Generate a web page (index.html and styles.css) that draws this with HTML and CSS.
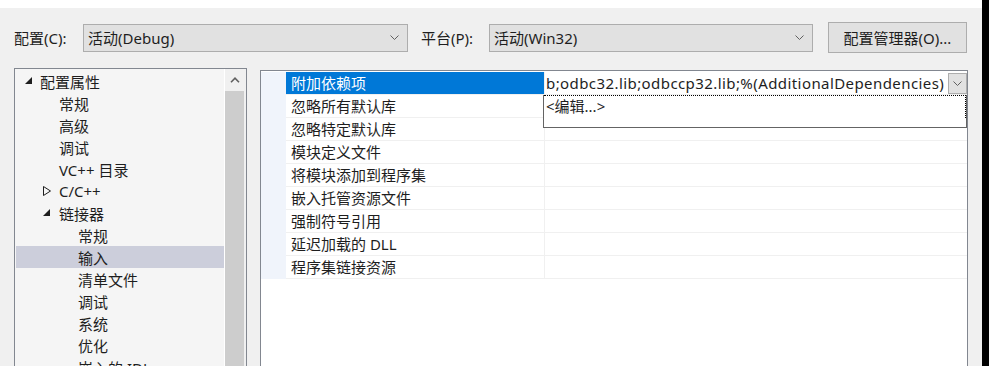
FILE: index.html
```html
<!DOCTYPE html>
<html>
<head>
    <title>属性页</title>
    <link rel="stylesheet" href="styles.css">
</head>
<body>
    <div class="page">
        <div class="window">
            <div class="topband"></div>

            <div class="toolbar">
                <span class="tb-label label-config">配置(C):</span>
                <div class="combo combo-config">
                    <span>活动(Debug)</span>
                    <svg class="chevron" width="9" height="5" viewBox="0 0 9 5"><path d="M0.5 0.5 L4.5 4.5 L8.5 0.5" fill="none" stroke="#606060"/></svg>
                </div>
                <span class="tb-label label-platform">平台(P):</span>
                <div class="combo combo-platform">
                    <span>活动(Win32)</span>
                    <svg class="chevron" width="9" height="5" viewBox="0 0 9 5"><path d="M0.5 0.5 L4.5 4.5 L8.5 0.5" fill="none" stroke="#606060"/></svg>
                </div>
                <button class="tb-button">配置管理器(O)...</button>
            </div>

            <div class="main">
                <div class="tree">
                    <ul class="tree-list">
                        <li class="node lvl0"><span class="exp"><svg width="8" height="8" viewBox="0 0 8 8"><polygon points="7,0 7,7 0,7" fill="#1e1e1e"/></svg></span>配置属性</li>
                        <li class="node lvl1"><span class="exp"></span>常规</li>
                        <li class="node lvl1"><span class="exp"></span>高级</li>
                        <li class="node lvl1"><span class="exp"></span>调试</li>
                        <li class="node lvl1"><span class="exp"></span>VC++ 目录</li>
                        <li class="node lvl1"><span class="exp"><svg width="9" height="10" viewBox="0 0 9 10"><polygon points="0.5,0.5 7.5,5 0.5,9.5" fill="none" stroke="#1e1e1e"/></svg></span>C/C++</li>
                        <li class="node lvl1"><span class="exp"><svg width="8" height="8" viewBox="0 0 8 8"><polygon points="7,0 7,7 0,7" fill="#1e1e1e"/></svg></span>链接器</li>
                        <li class="node lvl2"><span class="exp"></span>常规</li>
                        <li class="node lvl2 selected"><span class="exp"></span>输入</li>
                        <li class="node lvl2"><span class="exp"></span>清单文件</li>
                        <li class="node lvl2"><span class="exp"></span>调试</li>
                        <li class="node lvl2"><span class="exp"></span>系统</li>
                        <li class="node lvl2"><span class="exp"></span>优化</li>
                        <li class="node lvl2"><span class="exp"></span>嵌入的 IDL</li>
                    </ul>
                    <div class="vscroll">
                        <div class="vs-up"><svg width="10" height="6" viewBox="0 0 10 6"><path d="M1 5.2 L5 1.2 L9 5.2" fill="none" stroke="#606060" stroke-width="1.6"/></svg></div>
                        <div class="vs-thumb"></div>
                    </div>
                </div>

                <div class="grid">
                    <div class="prop-row active">
                        <div class="gutter"></div>
                        <div class="prop-name">附加依赖项</div>
                        <div class="prop-value">
                            <span class="value-text">b;odbc32.lib;odbccp32.lib;%(AdditionalDependencies)</span>
                            <span class="value-btn"><svg width="9" height="5" viewBox="0 0 9 5"><path d="M0.5 0.5 L4.5 4.5 L8.5 0.5" fill="none" stroke="#606060"/></svg></span>
                        </div>
                    </div>
                    <div class="prop-row"><div class="gutter"></div><div class="prop-name">忽略所有默认库</div><div class="prop-value"></div></div>
                    <div class="prop-row"><div class="gutter"></div><div class="prop-name">忽略特定默认库</div><div class="prop-value"></div></div>
                    <div class="prop-row"><div class="gutter"></div><div class="prop-name">模块定义文件</div><div class="prop-value"></div></div>
                    <div class="prop-row"><div class="gutter"></div><div class="prop-name">将模块添加到程序集</div><div class="prop-value"></div></div>
                    <div class="prop-row"><div class="gutter"></div><div class="prop-name">嵌入托管资源文件</div><div class="prop-value"></div></div>
                    <div class="prop-row"><div class="gutter"></div><div class="prop-name">强制符号引用</div><div class="prop-value"></div></div>
                    <div class="prop-row"><div class="gutter"></div><div class="prop-name">延迟加载的 DLL</div><div class="prop-value"></div></div>
                    <div class="prop-row"><div class="gutter"></div><div class="prop-name">程序集链接资源</div><div class="prop-value"></div></div>

                    <div class="dropdown-list">
                        <div class="dropdown-item">&lt;编辑...&gt;</div>
                    </div>
                </div>
            </div>
        </div>
        <div class="edge"></div>
    </div>
</body>
</html>
```

FILE: styles.css
```css
body {
    margin: 0;
    background-color: #f0f0f0;
    font-family: "Noto Sans", "Noto Sans CJK SC", sans-serif;
    font-size: 15px;
    color: #1e1e1e;
    overflow: hidden;
}

.page {
    display: flex;
    height: 366px;
    overflow: hidden;
}

.window {
    flex: 1;
    display: flex;
    flex-direction: column;
    overflow: hidden;
}

.edge {
    width: 7px;
    flex: none;
    background-color: #000;
}

.topband {
    height: 8px;
    flex: none;
    background-color: #fff;
}

/* toolbar */
.toolbar {
    display: flex;
    align-items: center;
    flex: none;
    height: 31px;
    margin-top: 14px;
    padding-left: 14px;
}

.tb-label {
    white-space: nowrap;
}

.label-config {
    width: 69px;
}

.label-platform {
    width: 68px;
    margin-left: 13px;
}

.combo {
    display: flex;
    align-items: center;
    justify-content: space-between;
    height: 28px;
    box-sizing: border-box;
    padding: 0 8px 0 4px;
    background-color: #e1e1e1;
    border: 1px solid #adadad;
}

.combo-config {
    width: 325px;
}

.combo-platform {
    width: 324px;
}

.tb-button {
    width: 139px;
    height: 31px;
    margin-left: 15px;
    padding: 0;
    background-color: #e1e1e1;
    border: 1px solid #adadad;
    font-family: inherit;
    font-size: 15px;
    color: #1e1e1e;
}

/* main area */
.main {
    display: flex;
    align-items: flex-start;
    flex: none;
    margin-top: 15px;
    padding-left: 14px;
}

.tree {
    display: flex;
    flex: none;
    width: 233px;
    height: 320px;
    box-sizing: border-box;
    border: 1px solid #828790;
    background-color: #f5f5f5;
}

.tree-list {
    list-style: none;
    margin: 0;
    padding: 1px 0 0 1px;
    width: 208px;
    flex: none;
}

.node {
    display: flex;
    align-items: center;
    height: 22px;
    white-space: nowrap;
}

.node.lvl0 {
    padding-left: 8px;
}

.node.lvl1 {
    padding-left: 27px;
}

.node.lvl2 {
    padding-left: 46px;
}

.node.selected {
    background-color: #cccedb;
}

.exp {
    display: flex;
    align-items: center;
    width: 16px;
    height: 22px;
    flex: none;
}

.lvl0 .exp svg {
    margin-left: 1px;
}

.vscroll {
    width: 22px;
    flex: none;
    box-sizing: border-box;
    border-left: 1px solid #fff;
    background-color: #f0f0f0;
    padding-right: 2px;
}

.vs-up {
    height: 22px;
    display: flex;
    align-items: center;
    justify-content: center;
}

.vs-thumb {
    height: 300px;
    background-color: #cdcdcd;
}

/* property grid */
.grid {
    position: relative;
    flex: none;
    width: 708px;
    height: 320px;
    margin-left: 13px;
    margin-top: 2px;
    box-sizing: border-box;
    border: 1px solid #828790;
    background-color: #fff;
    padding-top: 1px;
}

.prop-row {
    display: flex;
    height: 23px;
}

.gutter {
    width: 25px;
    background-color: #f0f4fb;
    flex: none;
}

.prop-name {
    width: 253px;
    padding-left: 5px;
    line-height: 22px;
    border-bottom: 1px solid #f0f0f0;
    border-right: 1px solid #f0f0f0;
    white-space: nowrap;
}

.prop-row.active .prop-name {
    background-color: #0078d7;
    color: #fff;
}

.prop-value {
    flex: 1;
    display: flex;
    align-items: center;
    justify-content: space-between;
    border-bottom: 1px solid #f0f0f0;
    height: 22px;
    padding-left: 1px;
    overflow: hidden;
}

.value-text {
    white-space: nowrap;
    letter-spacing: 0.42px;
}

.value-btn {
    display: flex;
    align-items: center;
    justify-content: center;
    width: 19px;
    height: 21px;
    box-sizing: border-box;
    background-color: #e1e1e1;
    border: 1px solid #adadad;
}

.dropdown-list {
    position: absolute;
    left: 282px;
    top: 24px;
    width: 424px;
    height: 33px;
    box-sizing: border-box;
    border: 1px solid #646464;
    border-top: none;
    background-color: #fff;
}

.dropdown-item {
    height: 23px;
    box-sizing: border-box;
    border-top: 1px dotted #000;
    border-right: 1px dotted #000;
    padding-left: 2px;
    line-height: 21px;
}
```
